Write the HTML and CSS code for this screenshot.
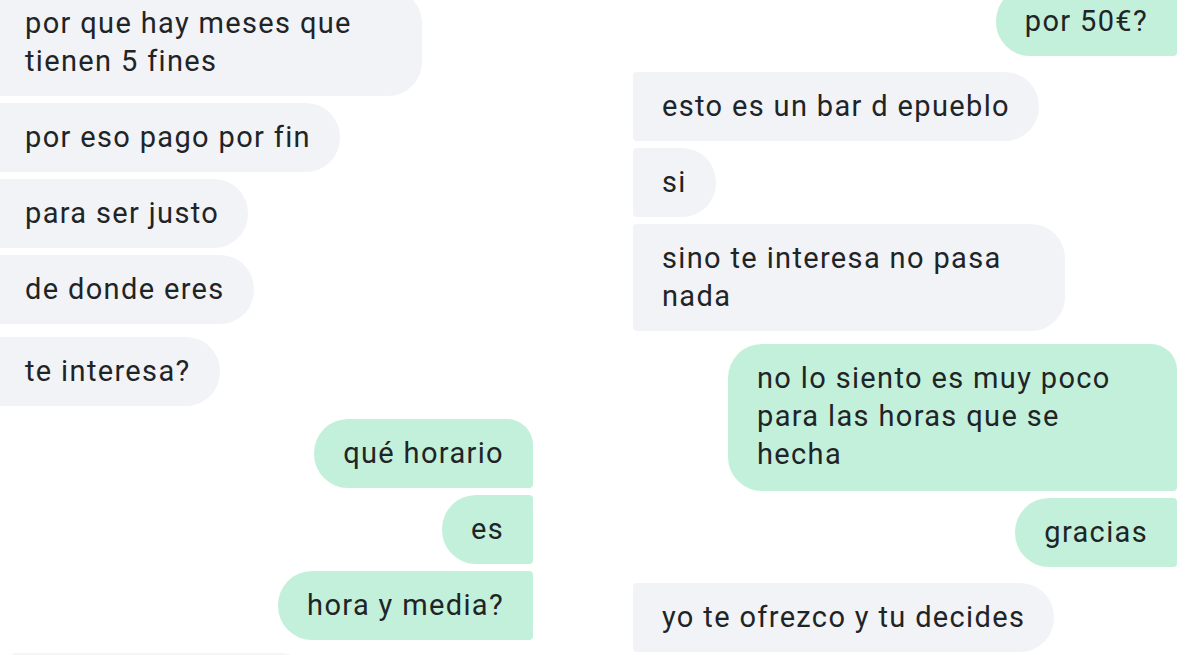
FILE: index.html
```html
<!DOCTYPE html>
<html lang="es">
<head>
<meta charset="utf-8">
<title>Chat</title>
<link rel="stylesheet" href="styles.css">
</head>
<body>
<div class="screen">
  <section class="col col-left">
    <div class="msg in">por que hay meses que tienen 5 fines</div>
    <div class="msg in">por eso pago por fin</div>
    <div class="msg in">para ser justo</div>
    <div class="msg in">de donde eres</div>
    <div class="msg in group">te interesa?</div>
    <div class="msg out first group">qué horario</div>
    <div class="msg out">es</div>
    <div class="msg out">hora y media?</div>
    <div class="stub group"></div>
  </section>
  <section class="col col-right">
    <div class="msg out">por 50€?</div>
    <div class="msg in group-lg">esto es un bar d epueblo</div>
    <div class="msg in">si</div>
    <div class="msg in">sino te interesa no pasa nada</div>
    <div class="msg out first group">no lo siento es muy poco para las horas que se hecha</div>
    <div class="msg out">gracias</div>
    <div class="msg in group-lg">yo te ofrezco y tu decides</div>
  </section>
</div>
</body>
</html>
```

FILE: styles.css
```css
html, body {
  margin: 0;
  padding: 0;
  background: #ffffff;
}

.screen {
  width: 1200px;
  height: 655px;
  overflow: hidden;
  display: flex;
  align-items: flex-start;
  font-family: Roboto, "Liberation Sans", sans-serif;
  font-size: 29px;
  letter-spacing: 1.35px;
  line-height: 38px;
  color: #1f2427;
}

.col {
  display: flex;
  flex-direction: column;
  gap: 7px;
}

.col-left {
  width: 533px;
  margin-top: -11px;
}

.col-right {
  width: 544px;
  margin-left: 100px;
  margin-top: -13px;
}

.msg {
  box-sizing: border-box;
  padding: 15px 29px 16px;
}

.in {
  align-self: flex-start;
  background: #f1f3f6;
  border-radius: 4px 34px 34px 4px;
}

.out {
  align-self: flex-end;
  background: #c3f0da;
  border-radius: 34px 4px 4px 34px;
}

.out.first {
  border-top-right-radius: 26px;
}

.group {
  margin-top: 6px;
}

.group-lg {
  margin-top: 9px;
}

.col-left .in {
  max-width: 422px;
  padding-left: 25px;
  border-radius: 0 34px 34px 0;
}

.col-right .in {
  max-width: 432px;
}

.col-right .out {
  max-width: 449px;
}

.col-right .out.first {
  padding-bottom: 18px;
}

.stub {
  align-self: flex-start;
  margin-left: 12px;
  width: 290px;
  height: 40px;
  background: #f3f5f7;
  border-radius: 4px 30px 30px 4px;
}
```
